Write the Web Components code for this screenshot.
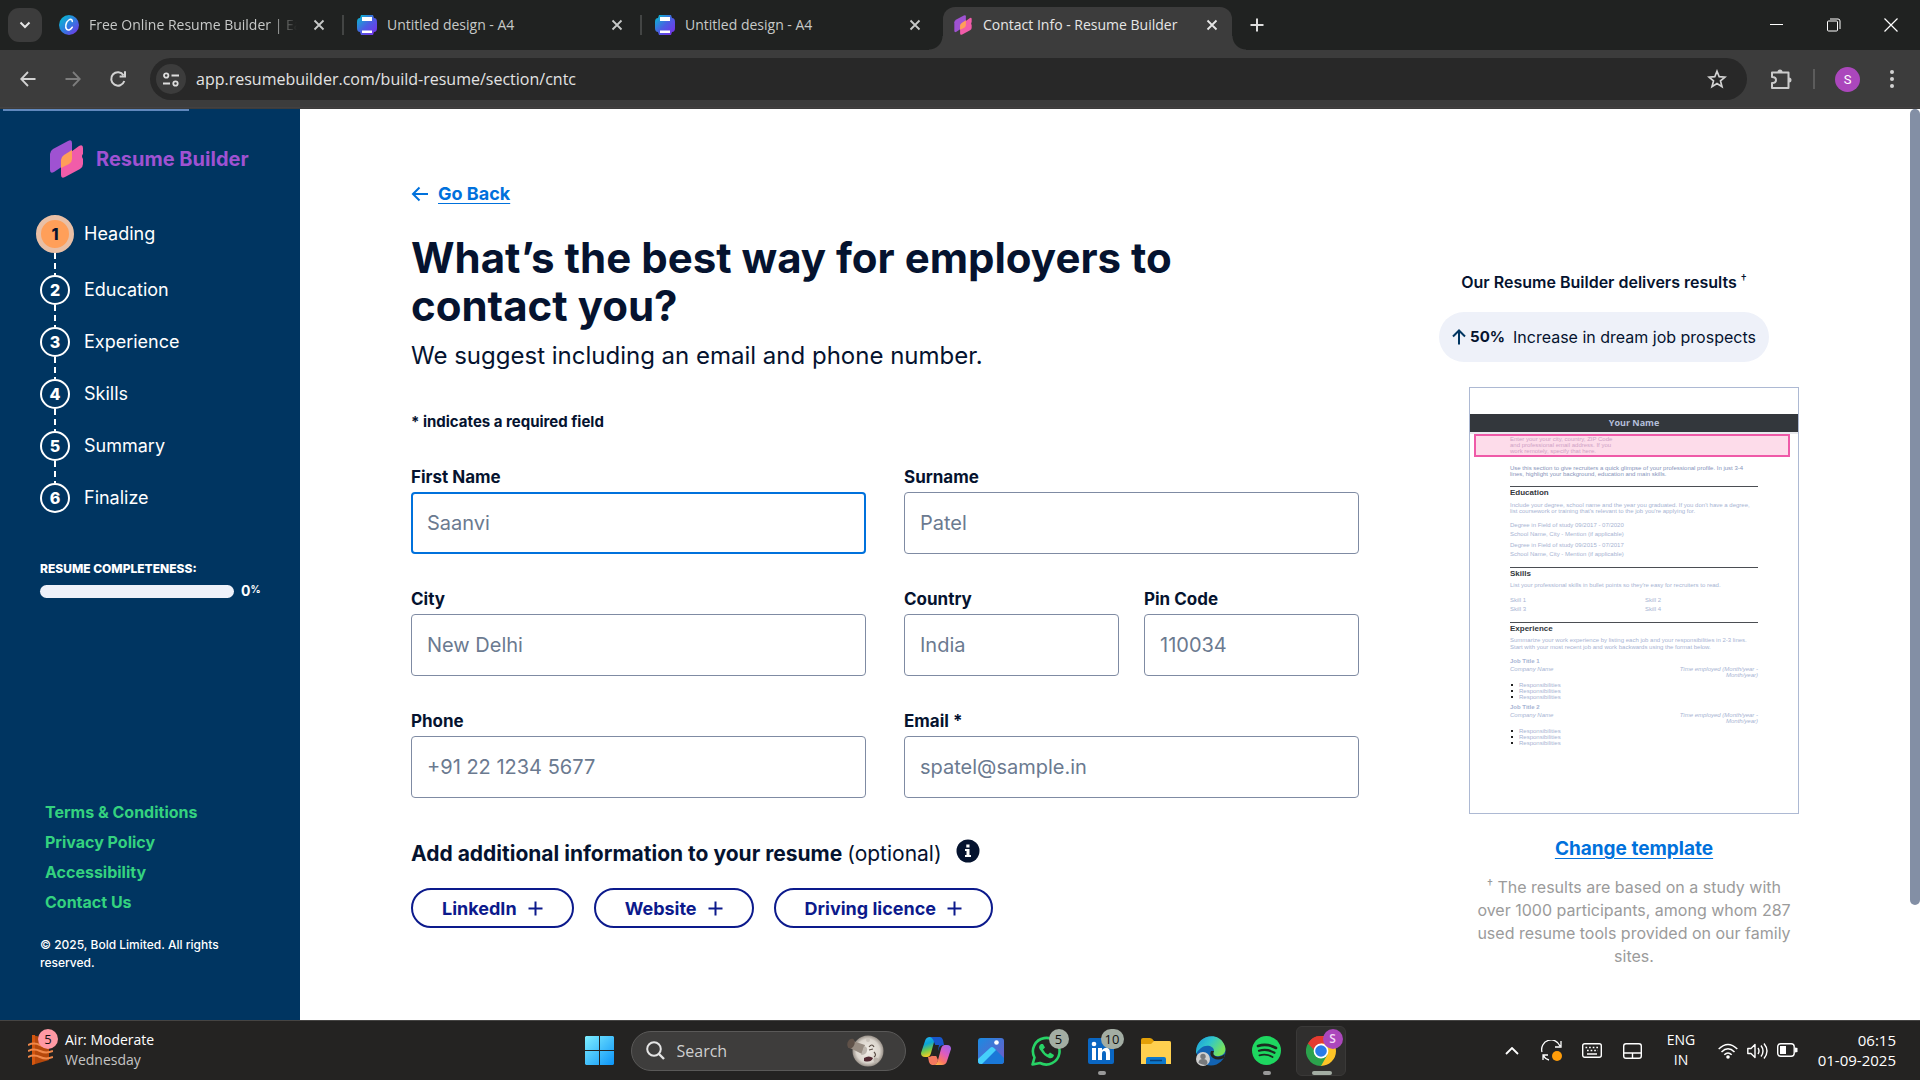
<!DOCTYPE html>
<html lang="en">
<head>
<meta charset="utf-8">
<title>Contact Info - Resume Builder</title>
<style>
html, body { height: 100%; margin: 0; }
body { display: flex; flex-direction: column; overflow: hidden; font-family: Inter, "Liberation Sans", sans-serif; color: #05132f; background: #fff; }
</style>
</head>
<body>
<browser-tabs></browser-tabs>
<browser-toolbar></browser-toolbar>
<resume-app></resume-app>
<task-bar></task-bar>
<script>
const base = `<style>
*, *::before, *::after { box-sizing: border-box; }
:host { box-sizing: border-box; }
button { font: inherit; color: inherit; background: none; border: 0; padding: 0; display: flex; align-items: center; justify-content: center; }
svg { display: block; flex: none; }
h1, h2, p, ol, ul { margin: 0; padding: 0; list-style: none; }
</style>`;
function define(name, html, setup) {
  customElements.define(name, class extends HTMLElement {
    constructor() {
      super();
      this.attachShadow({ mode: 'open' }).innerHTML = base + html;
    }
    connectedCallback() { if (setup) setup(this, this.shadowRoot); }
  });
}

const brandMark = (w, h) => `<svg width="${w}" height="${h}" viewBox="0 0 33 38"><path d="M0 14q0-3 3-5L18 1q4-2 4 2v17L4 32q-4 2-4-2z" fill="#9f52d2"/><path d="M11 22q0-3 3-5L29 6q4-2 4 2v6q-2 2 0 5v5q0 3-3 5L15 37q-4 2-4-2z" fill="#f15ca9"/><path d="M11 28v-8q0-3 3-5l8-5v9q0 3-3 5z" fill="#ff9f59"/></svg>`;
const canvaMark = `<svg width="20" height="20" viewBox="0 0 20 20"><defs><linearGradient id="g" x1="0" y1="0" x2="1" y2="1"><stop stop-color="#00c4cc"/><stop offset=".5" stop-color="#2f7de0"/><stop offset="1" stop-color="#7d2ae8"/></linearGradient></defs><circle cx="10" cy="10" r="10" fill="url(#g)"/><path d="M13.300 6.500C13.500 4.400 11.600 3.800 9.800 5 6.800 7 5.700 12.500 7.800 14.400c1.600 1.400 4.200.2 5.500-2.200" fill="none" stroke="#fff" stroke-width="1.500" stroke-linecap="round"/></svg>`;
const printMark = `<svg width="20" height="20" viewBox="0 0 20 20"><defs><linearGradient id="g" x1="0" y1="0" x2="1" y2="1"><stop stop-color="#00c4cc"/><stop offset=".5" stop-color="#4a5fe3"/><stop offset="1" stop-color="#7d2ae8"/></linearGradient></defs><path d="M4 0h12l1 3q3 0 3 4v6q0 4-3 4l-1 3H4l-1-3q-3 0-3-4V7q0-4 3-4z" fill="url(#g)"/><path d="M5 2h10v4H5zM5 15.500h10V18H5z" fill="#fff"/></svg>`;
const marks = { canva: canvaMark, print: printMark, brand: brandMark(20, 20) };

/* ---------- browser frame ---------- */
define('browser-tab', `<style>
:host { display: flex; flex: 0 1 298px; min-width: 0; height: 43px; align-items: center; padding: 0 10px 8px; position: relative; color: #c7c9c8; }
:host([active]) { flex-basis: 289px; background: #3c3c3c; border-radius: 12px 12px 0 0; color: #e6e6e6; }
:host([active])::before, :host([active])::after { content: ""; position: absolute; bottom: 0; width: 14px; height: 14px; }
:host([active])::before { left: -14px; background: radial-gradient(circle at 0 0, transparent 13px, #3c3c3c 14px); }
:host([active])::after { right: -14px; background: radial-gradient(circle at 100% 0, transparent 13px, #3c3c3c 14px); }
.title { flex: 1; margin: 0 12px 0 10px; white-space: nowrap; overflow: hidden; line-height: 20px; }
:host([fade]) .title { -webkit-mask-image: linear-gradient(90deg, #000 88%, transparent); mask-image: linear-gradient(90deg, #000 88%, transparent); }
button { width: 20px; height: 20px; }
.bar { width: 2px; height: 20px; background: #434544; margin: 0 -7px 0 13px; }
:host([last]) .bar { visibility: hidden; }
:host([active]) .bar { display: none; }
</style><span class="mark"></span><span class="title"><slot></slot></span>
<button aria-label="Close tab"><svg width="12" height="12" viewBox="0 0 12 12"><path d="M1.500 1.500l9 9m0-9l-9 9" stroke="currentColor" stroke-width="1.800"/></svg></button><span class="bar"></span>`,
(el, root) => { root.querySelector('.mark').innerHTML = marks[el.getAttribute('mark')]; });

define('browser-tabs', `<style>
:host { display: flex; flex: none; height: 50px; background: #202221; padding-left: 8px; font: 14px/20px "Open Sans", sans-serif; color: #e6e6e6; }
.menu { width: 34px; height: 34px; margin: 8px 7px 0 0; border-radius: 11px; background: #3c3c3c; }
nav { display: flex; flex: 0 1 1183px; align-items: flex-end; min-width: 0; }
.new { width: 28px; height: 28px; margin: 11px 0 0 11px; }
.window { display: flex; margin: 0 1px 0 auto; }
.window button { width: 57px; height: 49px; }
</style>
<button class="menu" aria-label="Search tabs"><svg width="12" height="8" viewBox="0 0 12 8"><path d="M1.500 1.500L6 6l4.500-4.500" fill="none" stroke="#e6e6e6" stroke-width="2"/></svg></button>
<nav>
<browser-tab mark="canva" fade>Free Online Resume Builder | Easy</browser-tab>
<browser-tab mark="print">Untitled design - A4</browser-tab>
<browser-tab mark="print" last>Untitled design - A4</browser-tab>
<browser-tab mark="brand" active>Contact Info - Resume Builder</browser-tab>
</nav>
<button class="new" aria-label="New tab"><svg width="14" height="14" viewBox="0 0 14 14"><path d="M7 .5v13M.5 7h13" stroke="#ddd" stroke-width="2"/></svg></button>
<div class="window">
<button aria-label="Minimize"><svg width="14" height="14" viewBox="0 0 14 14"><path d="M0 6.500h13" stroke="#fff"/></svg></button>
<button aria-label="Restore"><svg width="14" height="14" viewBox="0 0 14 14"><rect x=".5" y="3" width="10" height="10" rx="1" fill="none" stroke="#fff"/><path d="M3 1h8q2 0 2 2v8" fill="none" stroke="#fff"/></svg></button>
<button aria-label="Close"><svg width="14" height="14" viewBox="0 0 14 14"><path d="M.5 .5l13 13m0-13l-13 13" stroke="#fff" stroke-width="1.200"/></svg></button>
</div>`);

define('browser-toolbar', `<style>
:host { display: flex; flex: none; align-items: center; height: 59px; padding: 0 14px 1px 5px; background: linear-gradient(#3c3c3c 57px, #4b4546 57px, #3c3c3c 58px); color: #d2d2d2; font: 16px/24px "Open Sans", sans-serif; }
.nav { width: 45px; height: 40px; }
.address { display: flex; flex: 1; align-items: center; height: 42px; margin-left: 10px; padding: 0 20px 0 6px; border-radius: 21px; background: #282828; }
.site { width: 30px; height: 30px; border-radius: 15px; background: #3c3c3c; }
input { flex: 1; min-width: 0; border: 0; padding: 0 10px; background: none; color: #e3e3e3; font: inherit; }
.ext { width: 40px; height: 40px; margin-left: 14px; }
.bar { width: 2px; height: 20px; margin: 0 20px 0 12px; background: #5c5c5c; }
.avatar { width: 25px; height: 25px; border-radius: 50%; background: #ab47bc; color: #fff; font: 13px Roboto, sans-serif; }
.more { width: 28px; height: 30px; margin-left: 18px; }
</style>
<button class="nav" aria-label="Back"><svg width="16" height="16" viewBox="0 0 16 16"><path d="M15.500 8H1.500M8 1L1.200 8 8 15" fill="none" stroke="#d2d2d2" stroke-width="1.800"/></svg></button>
<button class="nav" aria-label="Forward"><svg width="16" height="16" viewBox="0 0 16 16"><path d="M.5 8h14M8 1l6.800 7L8 15" fill="none" stroke="#7d7d7d" stroke-width="1.800"/></svg></button>
<button class="nav" aria-label="Reload"><svg width="18" height="18" viewBox="0 0 18 18"><path d="M15.300 11A6.700 6.700 0 1 1 14.500 5.200M16 1.200V6.500H10.600" fill="none" stroke="#d2d2d2" stroke-width="2"/></svg></button>
<div class="address">
<button class="site" aria-label="Site information"><svg width="16" height="15" viewBox="0 0 16 15"><g fill="none" stroke="#ddd" stroke-width="1.800"><circle cx="3.200" cy="3.500" r="2.200"/><path d="M8.500 3.500H16M0 11.500h7"/><circle cx="12.500" cy="11.500" r="2.200"/></g></svg></button>
<input aria-label="Address" value="app.resumebuilder.com/build-resume/section/cntc">
<button aria-label="Bookmark"><svg width="20" height="20" viewBox="0 0 20 20"><path d="M10 2.200l2.200 5.500 5.800.4-4.500 3.800 1.500 5.800-5-3.200-5 3.200 1.500-5.800L2 8.100l5.800-.4z" fill="none" stroke="#d2d2d2" stroke-width="1.700"/></svg></button>
</div>
<button class="ext" aria-label="Extensions"><svg width="22" height="22" viewBox="0 0 22 22"><path d="M2 4.500h16.500V20H2v-5q4 0 4-3T2 9z" fill="none" stroke="#ccc" stroke-width="2" stroke-linejoin="round"/><path d="M7.500 4a2.500 2.500 0 0 1 5 0zM19 9.500a2.500 2.500 0 0 1 0 5z" fill="#ccc"/></svg></button>
<span class="bar"></span><button class="avatar" aria-label="Profile">S</button>
<button class="more" aria-label="Menu"><svg width="6" height="20" viewBox="0 0 6 20" fill="#d2d2d2"><circle cx="3" cy="3" r="2"/><circle cx="3" cy="10" r="2"/><circle cx="3" cy="17" r="2"/></svg></button>`);

/* ---------- page ---------- */
define('step-item', `<style>
:host { display: block; font-size: 18px; line-height: 24px; }
.row { display: flex; align-items: center; gap: 10px; }
.col { display: flex; justify-content: center; width: 38px; }
.num { width: 30px; height: 30px; border: 2px solid #fff; border-radius: 50%; display: grid; place-items: center; font-weight: 800; font-size: 16px; }
:host([current]) .num { width: 38px; height: 38px; border: 5px solid #e9bfa5; background: #ff9f59; color: #05132f; }
.dash { height: 22px; width: 2px; margin-left: 18px; background: repeating-linear-gradient(#fff 0 6px, transparent 6px 10px); }
:host([last]) .dash { display: none; }
</style><div class="row"><span class="col"><span class="num"><slot name="n"></slot></span></span><slot></slot></div><div class="dash"></div>`);

define('side-bar', `<style>
:host { display: flex; flex-direction: column; flex: none; width: 300px; padding: 0 36px 48px; background: #003561; color: #fff; }
.load { width: 186px; height: 2px; margin: 0 0 29px -33px; background: #6088bd; }
.brand { display: flex; align-items: center; gap: 13px; margin: 0 0 37px 14px; color: #9f52d2; font: 700 20px/38px Inter, sans-serif; white-space: nowrap; }
.label { margin: 47px 0 3px 4px; font-size: 12px; line-height: 18px; font-weight: 800; white-space: nowrap; }
.meter { display: flex; align-items: center; gap: 7px; margin-left: 4px; line-height: 20px; font-size: 14px; font-weight: 700; }
.track { width: 194px; height: 13px; border-radius: 7px; background: #eef1f9; }
sup { font-size: 10px; line-height: 0; vertical-align: 3px; }
.links { display: flex; flex-direction: column; margin: auto 0 19px 9px; }
.links a { color: #34d27f; font-size: 16px; line-height: 30px; font-weight: 700; text-decoration: none; }
.copy { margin-left: 4px; width: 200px; font-size: 12px; line-height: 18px; font-weight: 500; }
</style>
<div class="load"></div>
<div class="brand">${brandMark(33, 38)}<span>Resume Builder</span></div>
<nav>
<step-item current><span slot="n">1</span>Heading</step-item>
<step-item><span slot="n">2</span>Education</step-item>
<step-item><span slot="n">3</span>Experience</step-item>
<step-item><span slot="n">4</span>Skills</step-item>
<step-item><span slot="n">5</span>Summary</step-item>
<step-item last><span slot="n">6</span>Finalize</step-item>
</nav>
<p class="label">RESUME COMPLETENESS:</p>
<div class="meter"><span class="track"></span><span>0<sup>%</sup></span></div>
<div class="links"><a href="#terms">Terms &amp; Conditions</a><a href="#privacy">Privacy Policy</a><a href="#access">Accessibility</a><a href="#contact">Contact Us</a></div>
<p class="copy">© 2025, Bold Limited. All rights reserved.</p>`);

define('form-field', `<style>
:host { display: block; min-width: 0; }
label { display: block; margin-bottom: 3px; font-size: 17px; line-height: 24px; font-weight: 700; }
input { display: block; width: 100%; height: 62px; padding: 0 15px; border: 1px solid #7f8ba3; border-radius: 4px; background: #fff; color: #05132f; font: 20px Inter, sans-serif; outline: 0; }
:host([current]) input { border: 2px solid #0071dc; padding: 0 14px; }
input::placeholder { color: #6b7a90; opacity: 1; }
</style><label for="box"></label><input id="box">`,
(el, root) => {
  root.querySelector('label').textContent = el.getAttribute('label');
  root.querySelector('input').placeholder = el.getAttribute('hint');
});

define('add-button', `<style>
:host { display: block; }
button { height: 40px; padding: 0 29px; gap: 11px; border: 2px solid #0c1a8c; border-radius: 20px; color: #0c1a8c; font-size: 18px; font-weight: 700; white-space: nowrap; }
</style><button><slot></slot><svg width="15" height="15" viewBox="0 0 15 15"><path d="M7.500 .5v14M.5 7.500h14" stroke="currentColor" stroke-width="2"/></svg></button>`);

define('contact-form', `<style>
:host { display: block; padding-top: 73px; }
.back { display: flex; width: fit-content; align-items: center; gap: 9px; color: #0071dc; font-size: 18px; line-height: 24px; font-weight: 700; text-decoration: none; }
.back span { text-decoration: underline; text-underline-offset: 3px; }
h1 { max-width: 880px; margin-top: 28px; font-size: 42px; line-height: 48px; font-weight: 700; }
.sub { margin-top: 8px; font-size: 24px; line-height: 36px; }
.note { margin: 36px 0 31px; font-size: 15px; line-height: 24px; font-weight: 700; }
.grid { display: grid; grid-template-columns: 1fr 1fr; gap: 33px 38px; }
.pair { display: grid; grid-template-columns: 1fr 1fr; gap: 25px; }
.more { display: flex; align-items: center; gap: 14px; margin: 41px 0 19px; font-size: 21px; line-height: 30px; font-weight: 700; }
.more span { font-weight: 400; }
.more svg { margin-bottom: 6px; }
.adds { display: flex; gap: 20px; }
</style>
<a class="back" href="#back"><svg width="18" height="16" viewBox="0 0 18 16"><path d="M17 8H2.500M8.500 1.500L2 8l6.500 6.500" fill="none" stroke="currentColor" stroke-width="2"/></svg><span>Go Back</span></a>
<h1>What’s the best way for employers to contact you?</h1>
<p class="sub">We suggest including an email and phone number.</p>
<p class="note">* indicates a required field</p>
<div class="grid">
<form-field current label="First Name" hint="Saanvi"></form-field>
<form-field label="Surname" hint="Patel"></form-field>
<form-field label="City" hint="New Delhi"></form-field>
<div class="pair"><form-field label="Country" hint="India"></form-field><form-field label="Pin Code" hint="110034"></form-field></div>
<form-field label="Phone" hint="+91 22 1234 5677"></form-field>
<form-field label="Email *" hint="spatel@sample.in"></form-field>
</div>
<div class="more"><div>Add additional information to your resume <span>(optional)</span></div><svg width="24" height="24" viewBox="0 0 24 24"><circle cx="12" cy="12" r="11.500" fill="#05132f"/><path d="M10.300 5.500h3.200v3h-3.200zM9 10h4.500v6H15v2H9v-2h1.500v-4H9z" fill="#fff"/></svg></div>
<div class="adds"><add-button>LinkedIn</add-button><add-button>Website</add-button><add-button>Driving licence</add-button></div>`);

define('resume-preview', `<style>
:host { display: block; height: 427px; padding-top: 26px; border: 1px solid #adb9d3; background: #fff; color: #a7b4d3; font: 6px/9px "Liberation Sans", sans-serif; text-align: left; }
.name { height: 20px; border-bottom: 2px solid #e8eaee; background: #33373c; background-clip: padding-box; text-align: center; font: 700 9px/17px "Open Sans", sans-serif; color: #b4bfda; }
.mark { width: 316px; height: 23px; margin: 0 0 0 4px; padding: 0 34px; border: 2px solid #ef5aa8; background: #fddcea; color: #cfa3c6; line-height: 6px; white-space: pre; }
.body { margin: 0 40px; }
.sum { margin: 8px 0 9px; line-height: 6px; color: #8795ba; white-space: nowrap; }
h2 { margin-bottom: 1px; border-top: 1px solid #4b4e53; color: #33373c; font: 600 8px/12px "Liberation Sans", sans-serif; }
.tight { line-height: 6px; white-space: nowrap; }
.cols { display: grid; grid-template-columns: 135px 1fr; }
.job { display: flex; justify-content: space-between; font-style: italic; line-height: 6px; white-space: pre; }
.job span + span { text-align: right; }
ul { margin: 4px 0 3px; line-height: 6px; }
li { display: flex; align-items: center; gap: 6px; }
li::before { content: ""; width: 2px; height: 2px; margin-left: 1px; background: #222; }
b { display: block; line-height: 9px; }
</style>
<div class="name">Your Name</div>
<div class="mark">Enter your your city, country, ZIP Code
and professional email address. If you
work remotely, specify that here.</div>
<div class="body">
<p class="sum">Use this section to give recruiters a quick glimpse of your professional profile. In just 3-4<br>lines, highlight your background, education and main skills.</p>
<h2>Education</h2>
<p class="tight" style="margin:3px 0 7px">Include your degree, school name and the year you graduated. If you don't have a degree,<br>list coursework or training that's relevant to the job you're applying for.</p>
<p>Degree in Field of study 09/2017 - 07/2020<br>School Name, City - Mention (if applicable)</p>
<p style="margin:2px 0 8px">Degree in Field of study 09/2015 - 07/2017<br>School Name, City - Mention (if applicable)</p>
<h2>Skills</h2>
<p class="tight" style="margin:2px 0 8px">List your professional skills in bullet points so they're easy for recruiters to read.</p>
<div class="cols"><span>Skill 1</span><span>Skill 2</span><span>Skill 3</span><span>Skill 4</span></div>
<h2 style="margin-top:8px">Experience</h2>
<p class="tight" style="margin:2px 0 6px;line-height:7px">Summarize your work experience by listing each job and your responsibilities in 2-3 lines.<br>Start with your most recent job and work backwards using the format below.</p>
<b>Job Title 1</b>
<div class="job"><span>Company Name</span><span>Time employed (Month/year -
Month/year)</span></div>
<ul><li>Responsibilities</li><li>Responsibilities</li><li>Responsibilities</li></ul>
<b>Job Title 2</b>
<div class="job"><span>Company Name</span><span>Time employed (Month/year -
Month/year)</span></div>
<ul><li>Responsibilities</li><li>Responsibilities</li><li>Responsibilities</li></ul>
</div>`);

define('result-panel', `<style>
:host { display: flex; flex-direction: column; padding-top: 161px; }
.top, .low { width: 330px; text-align: center; }
.low { align-self: flex-end; }
h2 { font-size: 16px; line-height: 24px; font-weight: 600; white-space: nowrap; }
sup { font-size: 12px; line-height: 0; font-weight: 400; vertical-align: 5px; }
.pill { display: flex; align-items: center; justify-content: center; height: 50px; margin: 18px 0 25px; border-radius: 25px; background: #eef1f9; font-size: 16px; line-height: 24px; white-space: nowrap; gap: 8px; }
.pill svg { margin-right: -4px; }
.pill b { font-size: 15px; }
a { display: block; margin-top: 22px; color: #0071dc; font-size: 19px; line-height: 26px; font-weight: 700; text-underline-offset: 3px; }
.foot { margin-top: 14px; padding: 0 4px; color: #9b9b9b; font-size: 16px; line-height: 23px; }
</style>
<div class="top"><h2>Our Resume Builder delivers results <sup>†</sup></h2>
<div class="pill"><svg width="14" height="16" viewBox="0 0 14 16"><path d="M7 15.500V2M1 7.500l6-6 6 6" fill="none" stroke="#003561" stroke-width="2"/></svg><b>50%</b><span>Increase in dream job prospects</span></div></div>
<div class="low"><resume-preview></resume-preview>
<a href="#templates">Change template</a>
<p class="foot"><sup>†</sup> The results are based on a study with over 1000 participants, among whom 287 used resume tools provided on our family sites.</p></div>`);

define('resume-app', `<style>
:host { display: flex; flex: 1; min-height: 0; background: #fff; }
main { flex: 1; min-width: 0; display: grid; grid-template-columns: minmax(0, 948px) 360px; justify-content: space-between; padding: 0 111px; }
.scroll { width: 10px; height: 796px; border-radius: 5px; background: #838fa5; }
</style><side-bar></side-bar><main><contact-form></contact-form><result-panel></result-panel></main><div class="scroll"></div>`);

/* ---------- taskbar ---------- */
define('task-app', `<style>
:host { display: grid; place-items: center; position: relative; width: 55px; height: 59px; }
button { width: 50px; height: 50px; border-radius: 6px; }
:host([active]) button { background: #302f2e; border: 1px solid #3a3938; }
.badge { position: absolute; left: 30px; top: 8px; width: 20px; height: 20px; border-radius: 10px; background: #a3ada3; color: #111; font-size: 13px; line-height: 20px; text-align: center; }
:host([wide]) .badge { left: 27px; width: 23px; }
:host([active]) .badge { left: 29px; background: #ab47bc; color: #f3d9f7; font-size: 12px; font-weight: 600; }
.badge:empty { display: none; }
.run { position: absolute; bottom: 5px; left: 24px; width: 8px; height: 4px; border-radius: 2px; background: #999; display: none; }
:host([running]) .run { display: block; }
:host([active]) .run { left: 18px; width: 20px; background: #a3ada3; display: block; }
</style><button><slot></slot></button><span class="badge"></span><span class="run"></span>`,
(el, root) => {
  root.querySelector('button').setAttribute('aria-label', el.getAttribute('label'));
  root.querySelector('.badge').textContent = el.getAttribute('badge') || '';
});

define('task-bar', `<style>
:host { display: flex; flex: none; height: 60px; border-top: 1px solid #454443; background: #242322; color: #fff; font: 14px/20px "Open Sans", sans-serif; }
.side { flex: 1; display: flex; align-items: center; }
.weather { position: relative; margin-left: 28px; gap: 12px; text-align: left; }
.weather span span { color: #c4c4c4; }
.count { position: absolute; left: 10px; top: -1px; width: 20px; height: 20px; border-radius: 10px; background: #ff99a4; color: #111; text-align: center; font-size: 13px; }
.mid { display: flex; align-items: center; }
.search { display: flex; align-items: center; width: 275px; height: 40px; margin: 0 3px 0 4px; padding: 0 21px 0 14px; border: 1px solid #5a5958; border-radius: 20px; background: #3e3d3c; }
input { flex: 1; min-width: 0; border: 0; padding: 0 12px; background: none; font: 16px/24px "Open Sans", sans-serif; outline: 0; }
input::placeholder { color: #cfcfcf; opacity: 1; }
.tray { justify-content: flex-end; }
.tray button { width: 40px; height: 40px; }
.lang { width: 58px; text-align: center; }
.quick { display: flex; width: 90px; margin-left: 3px; justify-content: space-between; padding: 0 5px; }
.clock { width: 84px; margin: 0 24px 0 9px; text-align: right; font-size: 15px; }
.lang, .clock, .weather { padding-bottom: 2px; }
</style>
<div class="side"><button class="weather"><svg width="25" height="30" viewBox="0 0 25 30"><path d="M4 0l17 4v21L4 30z" fill="#b5480c"/><path d="M4 0h3v29l-3 1z" fill="#d4560f"/><path d="M0 10q6-3 12 0t13 0M0 16q6-3 12 0t13 0M0 22q6-3 12 0t13 0" fill="none" stroke="#f0884a" stroke-width="2"/></svg><span>Air: Moderate<br><span>Wednesday</span></span><span class="count">5</span></button></div>
<div class="mid">
<task-app label="Start"><svg width="29" height="29" viewBox="0 0 29 29"><defs><linearGradient id="w" gradientUnits="userSpaceOnUse" x1="0" y1="0" x2="29" y2="29"><stop stop-color="#7eeeff"/><stop offset="1" stop-color="#0c94f8"/></linearGradient></defs><path d="M1 0h13v14H0V1zM15 0h13l1 1v13H15zM0 15h14v14H1l-1-1zM15 15h14v13l-1 1H15z" fill="url(#w)"/></svg></task-app>
<label class="search"><svg width="19" height="19" viewBox="0 0 19 19"><circle cx="8" cy="8" r="6.800" fill="none" stroke="#e4e4e4" stroke-width="2"/><path d="M13 13l5 5" stroke="#e4e4e4" stroke-width="2.400"/></svg><input placeholder="Search" aria-label="Search">
<svg width="37" height="32" viewBox="0 0 37 32"><defs><radialGradient id="m"><stop stop-color="#f2eee8"/><stop offset=".75" stop-color="#dbd5cd"/><stop offset="1" stop-color="#989088"/></radialGradient></defs><circle cx="21" cy="16" r="15.500" fill="url(#m)"/><circle cx="21" cy="5" r="2" fill="#c9c2ba"/><circle cx="29" cy="25" r="2.500" fill="#bbb4ac"/><path d="M3 5l15 5-3 9L1 12z" fill="#968b81"/><ellipse cx="4" cy="8.500" rx="3.500" ry="5" fill="#5f5148" transform="rotate(20 4 8.500)"/><path d="M17 11l-3 9q5 0 6-4t-3-5" fill="#bdb6ae"/><path d="M22 12q3-4 5 0M22 15l4-1M27 17q3 3 0 5" fill="none" stroke="#5c5048" stroke-width="1.200"/><path d="M17 23q5-3 9 0-2 5-9 3z" fill="#512831"/></svg></label>
<task-app label="Copilot"><svg width="30" height="28" viewBox="0 0 30 28"><defs><linearGradient id="c" x1="0" y1="0" x2=".3" y2="1"><stop stop-color="#2bb8f1"/><stop offset=".4" stop-color="#0aa4d8"/><stop offset=".7" stop-color="#70c84d"/><stop offset="1" stop-color="#f6cb24"/></linearGradient><linearGradient id="d" x1=".8" y1="0" x2=".2" y2="1"><stop stop-color="#a463e8"/><stop offset=".4" stop-color="#dd5bc0"/><stop offset=".75" stop-color="#fb7565"/><stop offset="1" stop-color="#ffb647"/></linearGradient></defs><path d="M21 28h-8q3-1 4-5l3-11q1-4 4-4h2q4 0 4 4l-4 12q-1 4-5 4z" fill="url(#d)"/><path d="M9 0h8q-3 1-4 5l-3 11q-1 4-4 4H4q-4 0-4-4L4 4q1-4 5-4z" fill="url(#c)"/><path d="M9 0h10q2 0 3 3l1 5q-4 0-5 3l-1 3-4-9q-1-4-4-5z" fill="#1857cc"/><path d="M21 28H11q-2 0-3-3l-1-5q4 0 5-3l1-3 4 9q-1 5-4 5z" fill="#f4785f"/><path d="M13 8h5l-2 11h-5z" fill="#242322"/></svg></task-app>
<task-app label="Photos"><svg width="26" height="26" viewBox="0 0 26 26"><defs><linearGradient id="p" x1="0" x2="1" y2="1"><stop stop-color="#198be2"/><stop offset="1" stop-color="#7558c5"/></linearGradient></defs><rect width="26" height="26" rx="3" fill="url(#p)"/><path d="M0 22L12 10q2-2 4 0l10 10v3q0 3-3 3H3q-3 0-3-3z" fill="#1a78d8"/><path d="M0 21L12 10q2-2 4 0l2 2L4 26H3q-3 0-3-3z" fill="#45cffb"/><circle cx="18.500" cy="4.500" r="2.300" fill="#fff"/></svg></task-app>
<task-app label="WhatsApp" badge="5"><svg width="30" height="30" viewBox="0 0 30 30"><path d="M1.500 28.500l2-7A13.300 13.300 0 1 1 9 27z" fill="none" stroke="#27d366" stroke-width="2.600" stroke-linejoin="round"/><path d="M10 8q-4 3 0 7 3 5 8 7 4 1 5-3l-4-2.500-2 2q-3-1-5-5l2-2L12 8z" fill="#27d366"/></svg></task-app>
<task-app label="LinkedIn" badge="10" wide running><svg width="26" height="26" viewBox="0 0 26 26"><rect width="26" height="26" rx="2" fill="#0a66c2"/><path d="M4 10h4v12H4zM10 10h4v2q4-4 7-1 1 1 1 4v7h-4v-6q0-3-2-3t-2 3v6h-4z" fill="#fff"/><circle cx="6" cy="6" r="2.300" fill="#fff"/></svg></task-app>
<task-app label="File Explorer"><svg width="30" height="26" viewBox="0 0 30 26"><path d="M0 2q0-2 2-2h7q2 0 4 3h15q2 0 2 2v10H0z" fill="#e3a008"/><path d="M0 6h10l3-3h15q2 0 2 2v21H0z" fill="#ffd04f"/><path d="M5 26v-5q0-2 2-2h16q2 0 2 2v5z" fill="#0d78cc"/><path d="M9 22.500h12" stroke="#073f79" stroke-width="1.500"/></svg></task-app>
<task-app label="Edge"><svg width="30" height="30" viewBox="0 0 30 30"><defs><linearGradient id="e" x1="0" x2="1" y2=".5"><stop stop-color="#1997dd"/><stop offset=".5" stop-color="#30c6cb"/><stop offset="1" stop-color="#78e35b"/></linearGradient></defs><circle cx="15" cy="15" r="14.500" fill="#1263b3"/><path d="M0 15C1-1 22-5 28 8c4 8-1 13-8 12-4-1-3-3-2-5 0-5-8-7-13-3q-4 3-5 6z" fill="url(#e)"/><path d="M18 15q-2 4 2 5.500 5 1 9-2.500l-1 4q-6 3-11 0-4-3-2-7z" fill="#242322"/><circle cx="7" cy="23" r="7" fill="#d0d0d0"/><circle cx="7" cy="20.500" r="2.700" fill="#77797c"/><path d="M2.500 27q0-4 4.500-4t4.500 4-9 0" fill="#77797c"/></svg></task-app>
<task-app label="Spotify" running><svg width="29" height="29" viewBox="0 0 29 29"><circle cx="14.500" cy="14.500" r="14.500" fill="#1ed760"/><g fill="none" stroke="#1b2b20" stroke-linecap="round"><path d="M6 10q9-3 18 2" stroke-width="2.600"/><path d="M7 14.800q8-2.400 15.500 2" stroke-width="2.200"/><path d="M7.500 19.300q7-2 13 1.700" stroke-width="1.900"/></g></svg></task-app>
<task-app label="Chrome" badge="S" active><svg width="30" height="30" viewBox="0 0 30 30"><path d="M15 15L2 7.500A15 15 0 0 1 28 7.500z" fill="#e53b30"/><path d="M15 15V0a15 15 0 0 1 0 30l-1-1z" fill="#fdc427"/><path d="M2 7.500L15 15l6.500 3.500L15 30A15 15 0 0 1 2 7.500z" fill="#2ba24c"/><path d="M2 7.500A15 15 0 0 1 28 7.500H15L9 15z" fill="#e53b30"/><circle cx="15" cy="15" r="7.400" fill="#fff"/><circle cx="15" cy="15" r="5.800" fill="#2a7be8"/></svg></task-app>
</div>
<div class="side tray">
<button aria-label="Hidden icons"><svg width="14" height="8" viewBox="0 0 14 8"><path d="M1 7l6-6 6 6" fill="none" stroke="#fff" stroke-width="1.800"/></svg></button>
<button aria-label="Updates"><svg width="22" height="22" viewBox="0 0 22 22"><path d="M1 12A9.500 9.500 0 0 1 19 6M20 1v6h-6M8 20q-4-1-6-5M2 20v-5h5" fill="none" stroke="#fff" stroke-width="1.300"/><circle cx="16" cy="16" r="5" fill="#ff9d0a"/></svg></button>
<button aria-label="Keyboard"><svg width="20" height="15" viewBox="0 0 20 15"><rect x=".7" y=".7" width="18.600" height="13.600" rx="2" fill="none" stroke="#fff" stroke-width="1.400"/><path d="M3.500 4.500h13M5 7.500h11" stroke="#fff" stroke-width="1.700" stroke-dasharray="1.700 1.900"/><path d="M5 11h10" stroke="#fff" stroke-width="1.500"/></svg></button>
<button aria-label="Touchpad"><svg width="19" height="16" viewBox="0 0 19 16"><path d="M3 .7h13q2.300 0 2.300 2.300v10q0 2.300-2.300 2.300H3Q.7 15.300.7 13V3Q.7.7 3 .7zM.7 10h17.600M9.500 10v5" fill="none" stroke="#fff" stroke-width="1.400"/></svg></button>
<div class="lang">ENG<br>IN</div>
<div class="quick"><svg width="20" height="16" viewBox="0 0 20 16"><path d="M.7 6q9.300-9 18.600 0M3.500 9q6.500-6.500 13 0M6.300 11.800q3.700-3.700 7.400 0" fill="none" stroke="#fff" stroke-width="1.500"/><circle cx="10" cy="14" r="1.800" fill="#fff"/></svg>
<svg width="21" height="16" viewBox="0 0 21 16"><path d="M.8 5.500H4l4-4v13l-4-4H.8zM11 5q2 3 0 6M14 2.500q4 5.500 0 11M17 .5q6 7.500 0 15" fill="none" stroke="#fff" stroke-width="1.400" stroke-linejoin="round"/></svg>
<svg width="21" height="14" viewBox="0 0 21 14"><rect x=".7" y=".7" width="16.500" height="12.600" rx="3" fill="none" stroke="#fff" stroke-width="1.400"/><path d="M3 3h6v8H3zM18 4.500l2.500.5v4l-2.500.5z" fill="#fff"/></svg></div>
<div class="clock">06:15<br>01-09-2025</div>
</div>`);
</script>
</body>
</html>
